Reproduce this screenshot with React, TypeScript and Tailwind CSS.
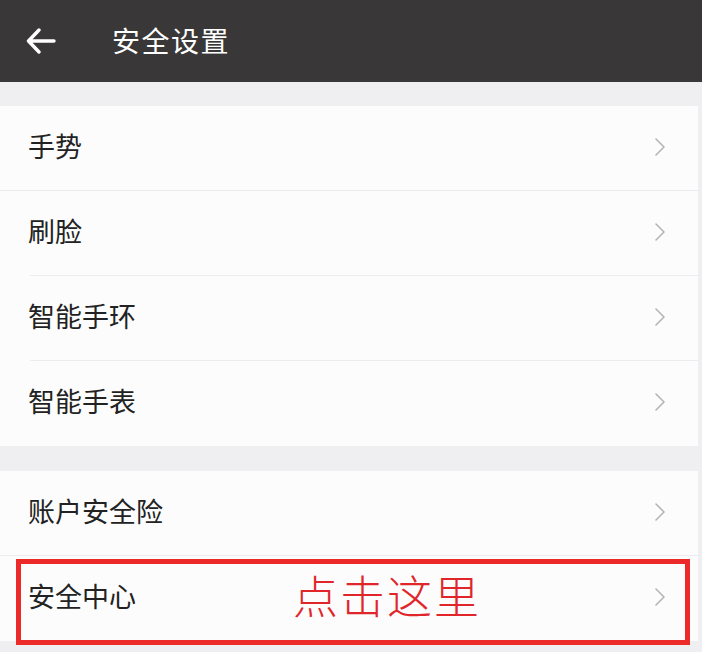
import React from "react";

const Chevron = () => (
  <svg width="12" height="20" viewBox="0 0 12 20" className="shrink-0 -translate-y-[2px]">
    <path d="M2 2 L10 10 L2 18" fill="none" stroke="#b4b4b8" strokeWidth="1.6" strokeLinecap="round" strokeLinejoin="round" />
  </svg>
);

const Row = ({ label, sep = true, firstSep = false }: { label: string; sep?: boolean; firstSep?: boolean }) => (
  <div className="relative flex h-[85px] items-center justify-between bg-[#fcfcfd] pl-[28px] pr-[32px]">
    <span className="-translate-y-[3px] text-[27px] leading-none text-[#222222]">{label}</span>
    <Chevron />
    {sep && (
      <div className={`absolute bottom-0 right-0 h-px bg-[#ececee] ${firstSep ? "left-0" : "left-[30px]"}`} />
    )}
  </div>
);

export default function App() {
  return (
    <div
      className="flex h-[652px] w-[702px] flex-col overflow-hidden bg-[#efeff1]"
      style={{ fontFamily: '"Noto Sans CJK SC", "Noto Sans", sans-serif' }}
    >
      <div className="flex h-[82px] shrink-0 items-center bg-[#393737]">
        <svg width="30" height="26" viewBox="0 0 30 26" className="ml-[26px]">
          <path d="M28 13 H3 M13 2 L2.5 13 L13 24" fill="none" stroke="#ffffff" strokeWidth="3.4" strokeLinecap="round" strokeLinejoin="round" />
        </svg>
        <span className="ml-[56px] -translate-y-[1px] text-[28px] leading-none text-white tracking-[1.5px]">安全设置</span>
      </div>
      <div className="h-[24px] shrink-0" />
      <div className="mr-[4px] flex flex-col">
        <Row label="手势" firstSep />
        <Row label="刷脸" />
        <Row label="智能手环" />
        <Row label="智能手表" sep={false} />
      </div>
      <div className="h-[25px] shrink-0" />
      <div className="mr-[4px] flex flex-col">
        <Row label="账户安全险" firstSep />
        <div className="relative flex h-[85px] items-center bg-[#fcfcfd] pl-[28px] pr-[32px]">
          <span className="-translate-y-[3px] text-[27px] leading-none text-[#222222]">安全中心</span>
          <span className="ml-[157px] -translate-y-[4px] text-[45px] font-light leading-none text-[#e0262a] tracking-[2px]">点击这里</span>
          <div className="flex-1" />
          <Chevron />
          <div className="absolute left-[16px] top-[3px] h-[86px] w-[674px] border-[5px] border-[#ec2a2a]" />
        </div>
      </div>
    </div>
  );
}
